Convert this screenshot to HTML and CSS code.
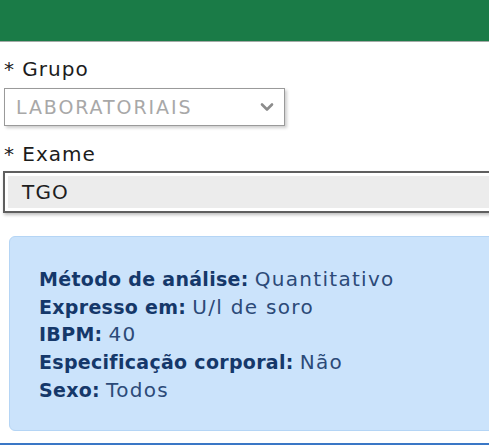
FILE: index.html
```html
<!DOCTYPE html>
<html lang="pt">
<head>
<meta charset="utf-8">
<link rel="stylesheet" href="styles.css">
</head>
<body>
<div class="topbar"></div>
<div class="form">
  <div class="field">
    <div class="label">* Grupo</div>
    <div class="select">
      <span class="select-text">LABORATORIAIS</span>
      <svg class="chev" width="14" height="10" viewBox="0 0 14 10"><path d="M2 2.5 L7 7.5 L12 2.5" fill="none" stroke="#8c8c8c" stroke-width="2.6" stroke-linecap="round" stroke-linejoin="round"/></svg>
    </div>
  </div>
  <div class="field field-exame">
    <div class="label">* Exame</div>
    <div class="input">
      <div class="input-inner">TGO</div>
    </div>
  </div>
  <div class="info">
    <div class="row"><b>Método de análise:</b> <span>Quantitativo</span></div>
    <div class="row"><b>Expresso em:</b> <span>U/l de soro</span></div>
    <div class="row"><b>IBPM:</b> <span>40</span></div>
    <div class="row"><b>Especificação corporal:</b> <span>Não</span></div>
    <div class="row"><b>Sexo:</b> <span>Todos</span></div>
  </div>
</div>
<div class="bottomline"></div>
</body>
</html>
```
FILE: styles.css
```css
html, body {
  margin: 0;
  padding: 0;
  overflow: hidden;
  background: #ffffff;
  width: 489px;
  height: 445px;
}
body {
  font-family: "DejaVu Sans", sans-serif;
  color: #222;
  position: relative;
}
.topbar {
  height: 41px;
  background: #1a7b47;
  border-bottom: 1px solid #a3aaa6;
}
.form {
  padding-left: 4px;
  width: 540px;
}
.field {
  display: flex;
  flex-direction: column;
}
.label {
  font-size: 20px;
  letter-spacing: 1px;
  line-height: 26px;
  color: #1c1c1c;
  margin-top: 14px;
  height: 32px;
}
.select {
  width: 258px;
  height: 36px;
  border: 1px solid #9a9a9a;
  box-shadow: 2px 2px 3px rgba(0,0,0,0.2);
  display: flex;
  align-items: center;
  justify-content: space-between;
  padding: 0 10px 0 11px;
}
.select-text {
  font-size: 19px;
  letter-spacing: 1.9px;
  color: #a8a8a8;
}
.field-exame .label {
  margin-top: 15px;
  height: 30px;
}
.input {
  margin-left: -1px;
  border: 2px solid #5f5f5f;
  padding: 3px;
  box-shadow: 1px 2px 3px rgba(0,0,0,0.25);
  height: 32px;
}
.input-inner {
  background: #ececec;
  height: 32px;
  line-height: 32px;
  padding-left: 14px;
  font-size: 20px;
  letter-spacing: 1.2px;
  color: #1e1e1e;
}
.info {
  margin: 23px 0 0 5px;
  background: #cbe3fb;
  border: 1px solid #b5d5f5;
  border-radius: 6px;
  padding: 29px 0 25px 29px;
  font-size: 19px;
  line-height: 27.7px;
  color: #2c4a78;
}
.info b {
  color: #15386a;
  letter-spacing: 0.3px;
}
.info span {
  font-size: 20px;
  letter-spacing: 1.3px;
}
.bottomline {
  position: absolute;
  left: 0;
  right: 0;
  top: 443px;
  height: 2px;
  background: #3a77c6;
}
```
